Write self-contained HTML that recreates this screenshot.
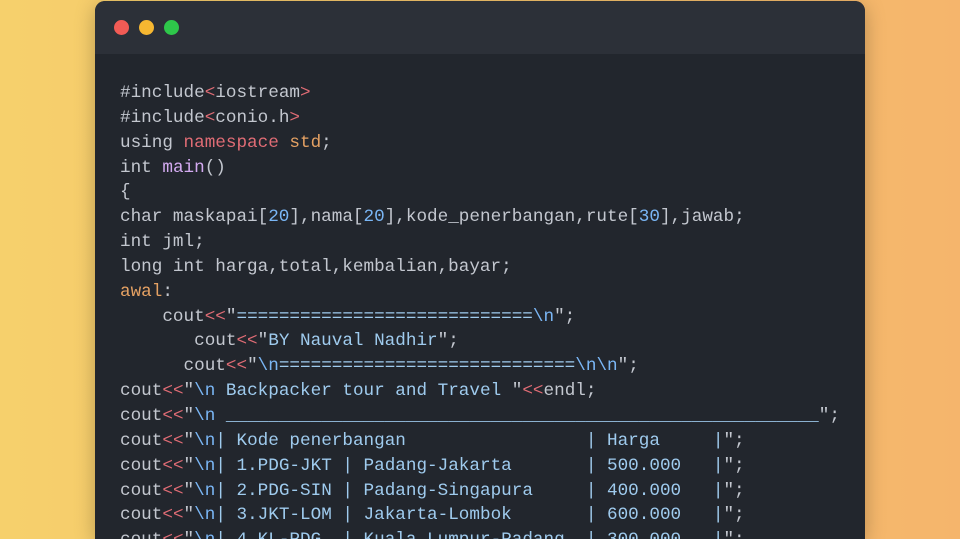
<!DOCTYPE html>
<html><head><meta charset="utf-8"><style>
html,body{margin:0;padding:0;width:960px;height:539px;overflow:hidden}
body{background:linear-gradient(90deg,#f6d06c 0%,#f5c36a 50%,#f5b56c 100%);position:relative}
.win{position:absolute;left:95px;top:1px;width:770px;height:538px;background:#22262d;border-radius:10px 10px 0 0;overflow:hidden;box-shadow:0 4px 20px rgba(0,0,0,.25)}
.bar{height:53px;background:#2c3038;position:relative}
.d{position:absolute;top:19px;width:15px;height:15px;border-radius:50%}
pre{position:absolute;left:25px;top:80px;margin:0;font-family:"Liberation Mono","DejaVu Sans Mono",monospace;font-size:17.65px;line-height:24.85px;color:#c3c7cf;white-space:pre}
.r{color:#e06c75}.o{color:#e5a163}.p{color:#d3aaf0}.s{color:#9fcbee}.n{color:#7ab6f5}
</style></head><body>
<div class="win"><div class="bar">
<div class="d" style="left:19px;background:#f25b55"></div>
<div class="d" style="left:44px;background:#f6b731"></div>
<div class="d" style="left:69px;background:#2ec74a"></div>
</div>
<pre>#include<span class="r">&lt;</span>iostream<span class="r">&gt;</span>
#include<span class="r">&lt;</span>conio.h<span class="r">&gt;</span>
using <span class="r">namespace</span> <span class="o">std</span>;
int <span class="p">main</span>()
{
char maskapai[<span class="n">20</span>],nama[<span class="n">20</span>],kode_penerbangan,rute[<span class="n">30</span>],jawab;
int jml;
long int harga,total,kembalian,bayar;
<span class="o">awal</span>:
    cout<span class="r">&lt;&lt;</span>"<span class="s">============================</span><span class="n">\n</span>";
       cout<span class="r">&lt;&lt;</span>"<span class="s">BY Nauval Nadhir</span>";
      cout<span class="r">&lt;&lt;</span>"<span class="n">\n</span><span class="s">============================</span><span class="n">\n\n</span>";
cout<span class="r">&lt;&lt;</span>"<span class="n">\n</span><span class="s"> Backpacker tour and Travel </span>"<span class="r">&lt;&lt;</span>endl;
cout<span class="r">&lt;&lt;</span>"<span class="n">\n</span><span class="s"> ________________________________________________________</span>";
cout<span class="r">&lt;&lt;</span>"<span class="n">\n</span><span class="s">| Kode penerbangan                 | Harga     |</span>";
cout<span class="r">&lt;&lt;</span>"<span class="n">\n</span><span class="s">| 1.PDG-JKT | Padang-Jakarta       | 500.000   |</span>";
cout<span class="r">&lt;&lt;</span>"<span class="n">\n</span><span class="s">| 2.PDG-SIN | Padang-Singapura     | 400.000   |</span>";
cout<span class="r">&lt;&lt;</span>"<span class="n">\n</span><span class="s">| 3.JKT-LOM | Jakarta-Lombok       | 600.000   |</span>";
cout<span class="r">&lt;&lt;</span>"<span class="n">\n</span><span class="s">| 4.KL-PDG  | Kuala Lumpur-Padang  | 300.000   |</span>";
</pre></div>
</body></html>
